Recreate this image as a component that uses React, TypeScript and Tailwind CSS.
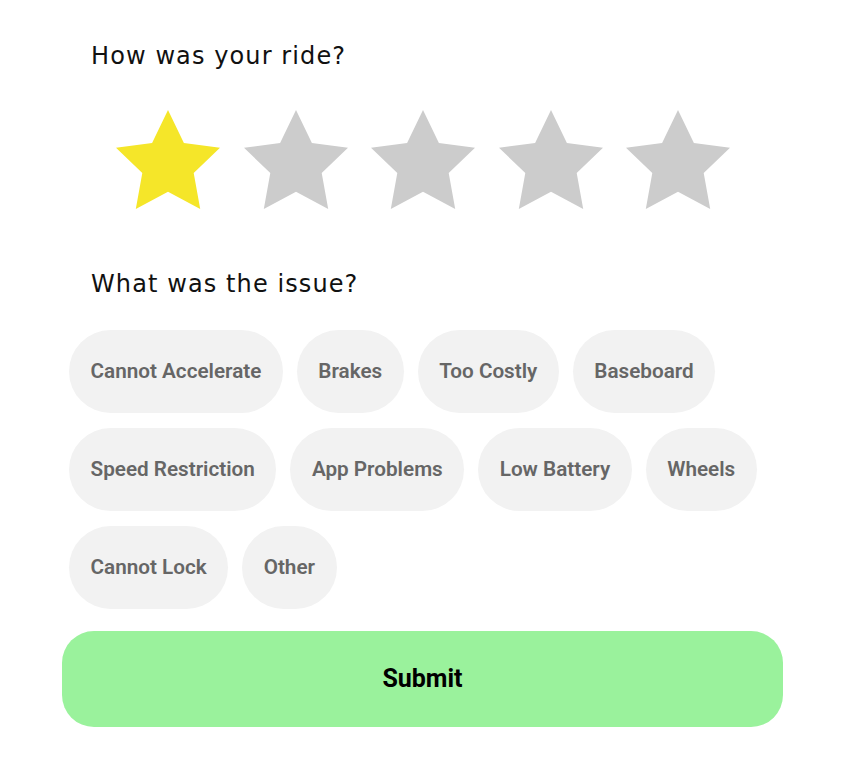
const issues = [
  ['Cannot Accelerate', 'Brakes', 'Too Costly', 'Baseboard'],
  ['Speed Restriction', 'App Problems', 'Low Battery', 'Wheels'],
  ['Cannot Lock', 'Other'],
]

function Star({ filled }: { filled: boolean }) {
  return (
    <svg width="104" height="99" viewBox="0 0 104 99">
      <polygon
        points="52,0 67.9,32.9 104,37.8 77.7,63 84.2,99 52,81.7 19.8,99 26.3,63 0,37.8 36.1,32.9"
        fill={filled ? '#f5e629' : '#cccccc'}
      />
    </svg>
  )
}

export default function App() {
  const rating = 1

  return (
    <div className="min-h-screen bg-white font-['Roboto',sans-serif]">
      <div className="ml-[62px] w-[721px] pt-[38px]">
        <h2 className="pl-[29px] text-[24px] leading-[36px] tracking-[1.1px] text-[#111] font-['DejaVu_Sans',sans-serif]">
          How was your ride?
        </h2>

        <div className="mt-[36px] flex gap-[23.5px] pl-[54px]">
          {[1, 2, 3, 4, 5].map((n) => (
            <Star key={n} filled={n <= rating} />
          ))}
        </div>

        <h2 className="mt-[57px] pl-[29px] text-[24px] leading-[36px] tracking-[1.1px] text-[#111] font-['DejaVu_Sans',sans-serif]">
          What was the issue?
        </h2>

        <div className="mt-[28px] flex flex-col gap-[15px] pl-[7px]">
          {issues.map((row, i) => (
            <div key={i} className="flex gap-[14px]">
              {row.map((label) => (
                <button
                  key={label}
                  className="h-[83px] rounded-[42px] bg-[#f2f2f2] px-[21.5px] text-[20.7px] font-semibold text-[#666]"
                >
                  {label}
                </button>
              ))}
            </div>
          ))}
        </div>

        <button className="mt-[22px] h-[96px] w-full rounded-[32px] bg-[#9af29c] text-[25px] font-bold text-black">
          Submit
        </button>
      </div>
    </div>
  )
}
